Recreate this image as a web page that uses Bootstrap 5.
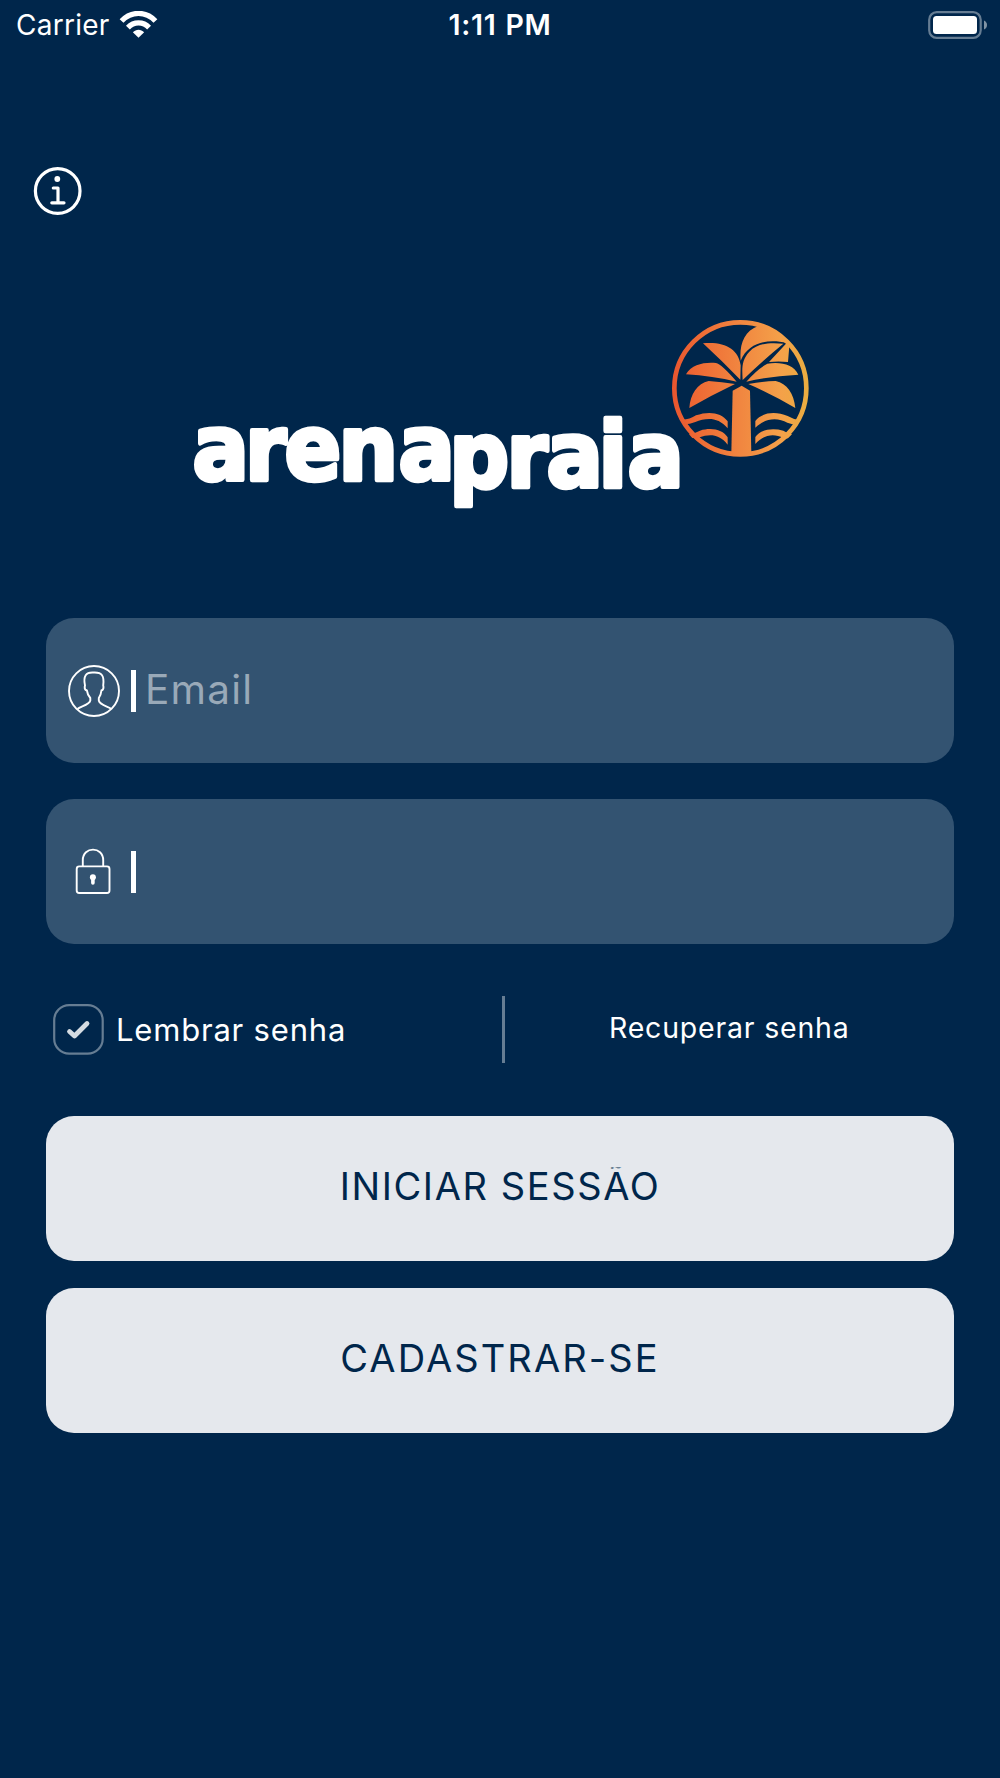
<!DOCTYPE html>
<html lang="pt-BR">
<head>
<meta charset="utf-8">
<meta name="viewport" content="width=device-width, initial-scale=1">
<title>Arena Praia</title>
<link href="https://cdn.jsdelivr.net/npm/bootstrap@5.3.0/dist/css/bootstrap.min.css" rel="stylesheet">
<style>
  body { background: #00264b; color: #fff; font-family: Inter, "Liberation Sans", sans-serif; min-height: 1778px; overflow-x: hidden; }
  svg { display: block; flex: none; }
  .status-bar { height: 50px; padding: 0 12px 0 16px; font-size: 28px; line-height: 52px; }
  .status-bar > div { flex: 1 1 0; }
  .carrier-name { letter-spacing: .25px; }
  .wifi { margin-left: 9px; }
  .clock { font-weight: 600; font-size: 28.5px; letter-spacing: .7px; word-spacing: 1px; padding-right: 4px; }
  .info-btn { margin: 116px 0 0 33px; line-height: 0; }
  .brand { margin: 102px 0 0 190px; }
  .wordmark { font-family: "DejaVu Sans", sans-serif; font-weight: 700; font-size: 90px; fill: #fff; stroke: #fff; stroke-width: 4.5px; stroke-linejoin: round; }
  .login { padding: 0 46px; margin-top: 100px; }
  .field { height: 145px; border-radius: 28px; background: #335371; padding-left: 22px; }
  .field + .field { margin-top: 36px; }
  .field-icon { width: 53px; }
  .caret { width: 5px; height: 42px; background: #fff; margin-left: 10px; flex: none; }
  .field input { font-size: 40.5px; font-weight: 400; color: #fff; padding: 0; margin: 0 0 2px 9px; letter-spacing: 1.2px; line-height: 48px; }
  .field input::placeholder { color: #99a9b8; opacity: 1; }
  .options { height: 67px; margin: 51.5px 0 53.5px; }
  .tick { margin-left: 7px; }
  .remember { font-size: 31px; font-weight: 400; letter-spacing: .8px; line-height: 40px; margin: 2px 0 0 12px; }
  .rule-v { width: 2.5px; height: 67px; background: #667d93; flex: none; }
  .left-half { width: 456px; }
  .recover { font-size: 28.5px; font-weight: 400; letter-spacing: .8px; color: #fff; line-height: 36px; margin-top: -2px; }
  .action { height: 145px; border-radius: 28px; font-size: 38px; font-weight: 400; background: #e5e8ed; color: #00264b; letter-spacing: 1.6px; line-height: 46px; padding: 0 0 5px; border: 0; }
  .action:hover { background: #d9dde4; color: #00264b; }
  .action + .action { margin-top: 26.5px; letter-spacing: 2.1px; }
  .tight { display: inline-block; clip-path: inset(4.5px 0 0 0); }
</style>
</head>
<body>
<header class="status-bar d-flex align-items-center">
  <div class="d-flex align-items-center">
    <span class="carrier-name">Carrier</span>
    <svg class="wifi" width="39" height="29" viewBox="0 0 38 28" fill="none" stroke="#fff" stroke-width="5.2">
      <path d="M2.500 9.600C12-.2 26-.2 35.500 9.600"/>
      <path d="M8.700 16C14.400 10 23.600 10 29.300 16"/>
      <path d="M13.500 20.600C16.700 17.300 21.300 17.300 24.500 20.600L19 26Z" fill="#fff" stroke="none"/>
    </svg>
  </div>
  <div class="clock text-center">1:11 PM</div>
  <div class="d-flex justify-content-end">
    <svg width="60" height="28" viewBox="0 0 60 28">
      <rect x="1.200" y="1.200" width="51.500" height="25.600" rx="7.500" fill="none" stroke="#667d93" stroke-width="2.200"/>
      <rect x="5" y="5" width="44" height="18" rx="3.500" fill="#fff"/>
      <path d="M56 9.500q3 1.500 3 4.500t-3 4.500z" fill="#8093a5"/>
    </svg>
  </div>
</header>

<button class="info-btn btn p-0 border-0 d-block" aria-label="Info">
  <svg width="50" height="50" viewBox="0 0 50 50" fill="none" stroke="#fff">
    <circle cx="24.700" cy="25" r="22.300" stroke-width="3.200"/>
    <circle cx="24.300" cy="13" r="2.900" fill="#fff" stroke="none"/>
    <path d="M20.300 22H25V36.800M18.800 36.800H31" stroke-width="3.200" stroke-linecap="round" stroke-linejoin="round"/>
  </svg>
</button>

<main>
  <svg class="brand" width="622" height="200" viewBox="190 318 622 200">
    <defs>
      <linearGradient id="sun" gradientUnits="userSpaceOnUse" x1="36" y1="0" x2="446" y2="0">
        <stop offset="0" stop-color="#e9552f"/><stop offset=".2" stop-color="#ee6b35"/><stop offset=".5" stop-color="#f18640"/><stop offset=".8" stop-color="#f4a149"/><stop offset="1" stop-color="#e9ad40"/>
      </linearGradient>
    </defs>
    <g transform="translate(660 310) scale(.33333)" fill="url(#sun)">
      <circle cx="241" cy="235" r="198" fill="none" stroke="url(#sun)" stroke-width="14"/>
      <path d="M242 152C238 105 250 64 296 47Q350 62 388 108L384 156Q355 153 327 156L380 99C330 86 266 94 242 152Z"/>
      <path d="M248 210C246 175 244 151 268 125C292 99 330 97 370 101Q310 150 248 210Z"/>
      <path d="M241 209Q184 151 129 100C195 94 236 118 242 166Z"/>
      <path d="M230 215Q158 198 78 193C96 163 132 156 168 159Q184 162 230 215Z"/>
      <path d="M225 222Q152 257 88 294C91 252 112 220 146 213Q185 216 225 222Z"/>
      <path d="M259 215Q292 177 322 161C365 155 400 164 415 194Q331 198 259 215Z"/>
      <path d="M265 222Q305 214 347 213C381 221 402 250 406 294Q337 253 265 222Z"/>
      <path d="M218 242L245 227L270 242L274 429Q244 435 214 429Z"/>
      <path d="M66 330Q90 328 108 316C147 302 185 308 203 334V355C174 319 137 323 106 336Q89 343 73 343Z"/>
      <path d="M418 330Q400 328 383 318C345 302 304 308 286 333V353C320 321 355 324 382 338Q397 344 412 344Z"/>
      <path d="M87 373Q105 370 120 362C156 351 189 360 203 382V404C179 372 148 371 119 382Q107 385 97 384Z"/>
      <path d="M396 373Q382 370 370 362C335 353 301 359 286 381V402C313 372 342 371 370 383Q376 386 384 385Z"/>
    </g>
    <g class="wordmark" transform="scale(.93 1)">
      <text y="480" x="207 263.500 306 364 428.500">arena</text>
      <text y="487" x="483 544.500 587.600 643.500 674.700">praia</text>
    </g>
  </svg>

  <form class="login" onsubmit="return false">
    <label class="field d-flex align-items-center">
      <svg class="field-icon" width="53" height="54" viewBox="0 0 53 54" fill="none" stroke="#fff" stroke-width="1.900">
        <circle cx="26" cy="27" r="25"/>
        <path d="M9.500 45C12 42.500 21.500 41 22.300 36.500V34Q19.500 31 18.900 26.500Q16.500 26 16.700 23L17 21.500C15 12 18 8 25.500 8.500C34 8 36.500 12 35.200 21.500L35.500 23Q35.500 26 33.400 26.500Q33 31 30.800 34V36.500C31.500 41 40.500 42.500 43.500 45"/>
      </svg>
      <span class="caret"></span>
      <input class="form-control border-0 bg-transparent shadow-none" type="text" placeholder="Email">
    </label>
    <label class="field d-flex align-items-center">
      <svg class="field-icon" width="53" height="54" viewBox="0 0 53 54" fill="none" stroke="#fff" stroke-width="1.900">
        <rect x="8.700" y="21.400" width="32.800" height="26.600" rx="2.500"/>
        <path d="M14.800 21.200V15.200C14.800 1.100 35.200 1.100 35.200 15.200V21.200"/>
        <circle cx="24.900" cy="32.300" r="3" fill="#fff" stroke="none"/>
        <path d="M24.900 33V38" stroke-width="3.600" stroke-linecap="round"/>
      </svg>
      <span class="caret"></span>
      <input class="form-control border-0 bg-transparent shadow-none" type="password" aria-label="Senha">
    </label>

    <div class="options d-flex align-items-center">
      <div class="left-half d-flex align-items-center">
        <svg class="tick" width="51" height="51" viewBox="0 0 51 51" fill="none">
          <rect x="1.200" y="1.200" width="48.500" height="48.500" rx="15" stroke="#667d93" stroke-width="2.200"/>
          <path d="M16.500 27.500L21.500 32L34 19.500" stroke="#d5dce2" stroke-width="4.800" stroke-linecap="round" stroke-linejoin="round"/>
        </svg>
        <span class="remember">Lembrar senha</span>
      </div>
      <div class="rule-v"></div>
      <a class="recover text-decoration-none flex-fill text-center" href="#">Recuperar senha</a>
    </div>

    <button class="action btn w-100 d-block"><span class="tight">INICIAR SESSÃO</span></button>
    <button class="action btn w-100 d-block">CADASTRAR-SE</button>
  </form>
</main>
<script src="https://cdn.jsdelivr.net/npm/bootstrap@5.3.0/dist/js/bootstrap.bundle.min.js"></script>
</body>
</html>
